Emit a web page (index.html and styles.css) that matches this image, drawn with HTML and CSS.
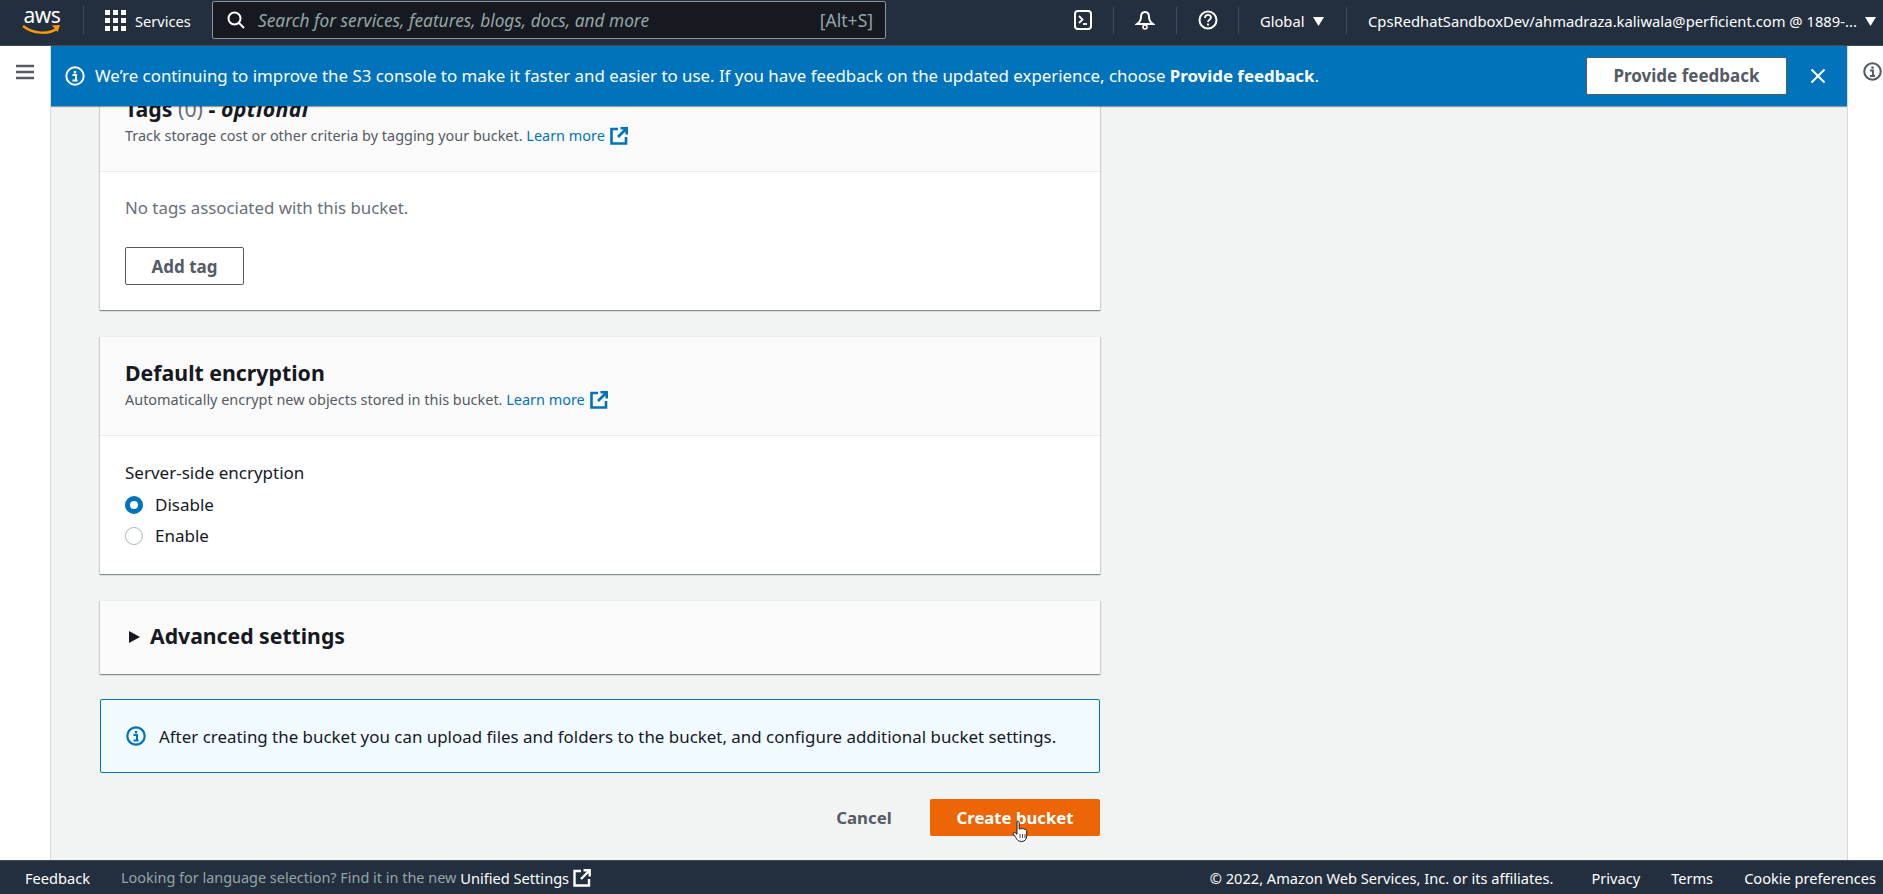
FILE: index.html
```html
<!DOCTYPE html>
<html lang="en">
<head>
<meta charset="utf-8">
<title>Create bucket - S3</title>
<link rel="stylesheet" href="styles.css">
</head>
<body>
<header class="topbar">
  <div class="logo"><span class="logo-text">aws</span>
    <svg class="logo-smile" viewBox="0 0 40 12" width="40" height="12"><path d="M1 2c10 8 26 9 35 2" fill="none" stroke="#f90" stroke-width="2.4"/><path d="M30 1.500l8-.5-2.500 7z" fill="#f90"/></svg>
  </div>
  <span class="sep sep-logo"></span>
  <svg class="grid-icon" viewBox="0 0 21 21" width="21" height="21"><g fill="#fff"><rect width="5" height="5"/><rect x="8" width="5" height="5"/><rect x="16" width="5" height="5"/><rect y="8" width="5" height="5"/><rect x="8" y="8" width="5" height="5"/><rect x="16" y="8" width="5" height="5"/><rect y="16" width="5" height="5"/><rect x="8" y="16" width="5" height="5"/><rect x="16" y="16" width="5" height="5"/></g></svg>
  <span class="services">Services</span>
  <div class="search">
    <svg viewBox="0 0 18 18" width="18" height="18" class="search-icon"><circle cx="7.500" cy="7.500" r="6" fill="none" stroke="#fff" stroke-width="2"/><path d="M12 12l5 5" stroke="#fff" stroke-width="2"/></svg>
    <span class="search-text">Search for services, features, blogs, docs, and more</span>
    <span class="search-key">[Alt+S]</span>
  </div>
  <div class="top-right">
    <div class="tool tool-first"><svg viewBox="0 0 20 20" width="20" height="20"><rect x="2" y="1" width="16" height="18" rx="3" fill="none" stroke="#fff" stroke-width="2"/><path d="M6 6l3.500 3.500L6 13" fill="none" stroke="#fff" stroke-width="1.800"/><path d="M10 14h4" stroke="#fff" stroke-width="1.800"/></svg></div>
    <span class="sep"></span>
    <div class="tool"><svg viewBox="0 0 20 20" width="20" height="20"><path d="M10 2c-3 0-4 2.500-4 5 0 3-1 5-4 7h16c-3-2-4-4-4-7 0-2.500-1-5-4-5z" fill="none" stroke="#fff" stroke-width="2"/><circle cx="10" cy="17" r="2" fill="none" stroke="#fff" stroke-width="1.600"/></svg></div>
    <span class="sep"></span>
    <div class="tool tool-help"><svg viewBox="0 0 20 20" width="20" height="20"><circle cx="10" cy="10" r="8.500" fill="none" stroke="#fff" stroke-width="2"/><path d="M7 8c0-4 6-4 6-.5 0 2.200-3 2.300-3 4.500" fill="none" stroke="#fff" stroke-width="1.800"/><rect x="9" y="13.500" width="2" height="2" fill="#fff"/></svg></div>
    <span class="sep"></span>
    <span class="region">Global</span>
    <svg class="caret region-caret" viewBox="0 0 11 9" width="11" height="9"><path d="M0 0h11L5.500 9z" fill="#fff"/></svg>
    <span class="sep sep-account"></span>
    <span class="account">CpsRedhatSandboxDev/ahmadraza.kaliwala@perficient.com @ 1889-...</span>
    <svg class="caret" viewBox="0 0 11 9" width="11" height="9"><path d="M0 0h11L5.500 9z" fill="#fff"/></svg>
  </div>
</header>

<div class="middle">
  <nav class="sidenav">
    <svg viewBox="0 0 18 16" width="18" height="16"><path d="M0 2h18M0 8h18M0 14h18" stroke="#545b64" stroke-width="2.600"/></svg>
  </nav>
  <main class="main">
    <div class="flash">
      <svg class="info-icon" viewBox="0 0 20 20" width="20" height="20"><circle cx="10" cy="10" r="8.700" fill="none" stroke="#fff" stroke-width="2"/><rect x="8.800" y="5" width="2.400" height="2.400" fill="#fff"/><path d="M7.500 9h3.500v5M7.500 14.500h5" fill="none" stroke="#fff" stroke-width="2"/></svg>
      <p class="flash-text">We’re continuing to improve the S3 console to make it faster and easier to use. If you have feedback on the updated experience, choose <strong>Provide feedback</strong>.</p>
      <button class="flash-btn">Provide feedback</button>
      <svg class="close" viewBox="0 0 16 16" width="16" height="16"><path d="M1.500 1.500l13 13M14.500 1.500l-13 13" stroke="#fff" stroke-width="2"/></svg>
    </div>
    <div class="stack">
      <section class="card">
        <div class="card-head">
          <h2 class="card-title">Tags <span class="count">(0)</span> - <em>optional</em></h2>
          <p class="card-sub">Track storage cost or other criteria by tagging your bucket. <a class="link">Learn more</a><svg class="ext" viewBox="0 0 18 18" width="18" height="18"><path d="M8 2H1.500v14.500H16V10" fill="none" stroke="#0073bb" stroke-width="2.600"/><path d="M10.500 1.300H16.700V7.500M16 2l-8 8" fill="none" stroke="#0073bb" stroke-width="2.600"/></svg></p>
        </div>
        <div class="card-body tags-body">
          <p class="empty">No tags associated with this bucket.</p>
          <button class="btn-outline">Add tag</button>
        </div>
      </section>

      <section class="card">
        <div class="card-head">
          <h2 class="card-title">Default encryption</h2>
          <p class="card-sub">Automatically encrypt new objects stored in this bucket. <a class="link">Learn more</a><svg class="ext" viewBox="0 0 18 18" width="18" height="18"><path d="M8 2H1.500v14.500H16V10" fill="none" stroke="#0073bb" stroke-width="2.600"/><path d="M10.500 1.300H16.700V7.500M16 2l-8 8" fill="none" stroke="#0073bb" stroke-width="2.600"/></svg></p>
        </div>
        <div class="card-body enc-body">
          <p class="field-label">Server-side encryption</p>
          <div class="radio-row"><span class="radio radio-on"></span><span>Disable</span></div>
          <div class="radio-row"><span class="radio"></span><span>Enable</span></div>
        </div>
      </section>

      <section class="card adv">
        <span class="tri"></span>
        <h2 class="adv-title">Advanced settings</h2>
      </section>

      <div class="info">
        <svg class="info-icon" viewBox="0 0 20 20" width="20" height="20"><circle cx="10" cy="10" r="8.700" fill="none" stroke="#0073bb" stroke-width="2.200"/><rect x="8.800" y="5" width="2.400" height="2.400" fill="#0073bb"/><path d="M7.500 9h3.500v5M7.500 14.500h5" fill="none" stroke="#0073bb" stroke-width="2"/></svg>
        <p>After creating the bucket you can upload files and folders to the bucket, and configure additional bucket settings.</p>
      </div>

      <div class="actions">
        <button class="btn-cancel">Cancel</button>
        <button class="btn-primary">Create bucket</button>
      </div>
    </div>
    <svg class="cursor" viewBox="0 0 17 23" width="17" height="23"><path d="M5 1.500c1-.8 2.200-.2 2.200 1V9l1 .1c.5-.9 1.900-.9 2.300 0 .6-.7 1.900-.5 2.200.4 1-.3 2 .3 2 1.400v5c0 3-1.800 5.600-5 5.600-3.300 0-4.500-1.500-6-4L1.300 14c-.6-1 .6-2.200 1.700-1.400l2 1.700z" fill="#fff" stroke="#16191f" stroke-width="1"/><path d="M8 14v4M10.500 14v4M13 14v4" stroke="#16191f" stroke-width=".8"/></svg>
  </main>
  <aside class="rail">
    <svg viewBox="0 0 18 18" width="19" height="19"><circle cx="9" cy="9" r="7.800" fill="none" stroke="#545b64" stroke-width="2"/><rect x="7.900" y="4.200" width="2.200" height="2.200" fill="#545b64"/><path d="M6.500 8h3v5M6.500 13.300h5" fill="none" stroke="#545b64" stroke-width="1.800"/></svg>
  </aside>
</div>

<footer class="footer">
  <span class="foot-feedback">Feedback</span>
  <span class="foot-muted">Looking for language selection? Find it in the new</span>
  <span class="foot-unified">Unified Settings</span>
  <svg class="foot-ext" viewBox="0 0 18 18" width="18" height="18"><path d="M8 2H1.500v14.500H16V10" fill="none" stroke="#fff" stroke-width="2.400"/><path d="M10.500 1.300H16.700V7.500M16 2l-8 8" fill="none" stroke="#fff" stroke-width="2.400"/></svg>
  <div class="foot-right">
    <span>© 2022, Amazon Web Services, Inc. or its affiliates.</span>
    <span class="foot-privacy">Privacy</span>
    <span class="foot-terms">Terms</span>
    <span class="foot-cookie">Cookie preferences</span>
  </div>
</footer>
</body>
</html>
```

FILE: styles.css
```css
* { box-sizing: border-box; }
html, body { margin: 0; height: 100%; }
body {
  display: flex;
  flex-direction: column;
  height: 894px;
  overflow: hidden;
  font-family: "Noto Sans", "Open Sans", sans-serif;
  color: #16191f;
  background: #fff;
}
p, h2 { margin: 0; }
button { font-family: inherit; cursor: pointer; }

.topbar {
  flex: 0 0 46px;
  display: flex;
  align-items: center;
  padding-bottom: 5px;
  background: #232f3e;
  border-bottom: 1px solid #414b58;
  color: #fff;
  font-size: 14.600px;
}
.logo { position: relative; flex: none; width: 40px; height: 32px; margin-left: 22px; }
.logo-text { display: block; font-size: 21px; line-height: 22px; text-align: center; letter-spacing: -.5px; }
.logo-smile { position: absolute; left: 0; top: 20px; }
.sep { flex: none; width: 1px; height: 28px; background: #414b58; }
.sep-logo { margin-left: 21px; }
.grid-icon { flex: none; margin-left: 21px; }
.services { flex: none; margin: 2px 0 0 9px; width: 56px; white-space: nowrap; }
.search {
  flex: none;
  display: flex;
  align-items: center;
  width: 674px;
  height: 38px;
  margin-left: 21px;
  padding: 0 12px 0 14px;
  background: #16191f;
  border: 1px solid #879596;
  border-radius: 2px;
}
.search-icon { flex: none; }
.search-text { margin-left: 13px; font-size: 17.300px; font-style: italic; color: #95a5a6; white-space: nowrap; }
.search-key { margin-left: auto; font-size: 17.500px; color: #95a5a6; white-space: nowrap; }

.top-right { flex: none; display: flex; align-items: center; width: 830px; margin-left: auto; height: 100%; }
.tool { flex: none; display: flex; justify-content: center; width: 62px; }
.tool-first { width: 60px; }
.tool-help { width: 61px; }
.top-right .sep { height: 27px; }
.region { flex: none; margin: 2px 0 0 21px; width: 45px; font-size: 14.700px; white-space: nowrap; }
.caret { flex: none; margin: 2px 7px 0 8px; }
.region-caret { margin-right: 22px; }
.account { flex: none; margin: 2px 0 0 21px; width: 489px; font-size: 14.770px; white-space: nowrap; }

.middle { flex: 1; display: flex; min-height: 0; }
.sidenav { flex: 0 0 50px; padding: 17px 0 0 16px; background: #fff; }
.rail { flex: 0 0 35px; padding: 16px 0 0 15px; background: #fff; }
.rail svg { display: block; }
.main {
  position: relative;
  flex: 1;
  min-width: 0;
  overflow: hidden;
  background: #f2f3f3;
  border-left: 1px solid #d5dbdb;
  border-right: 1px solid #d5dbdb;
}

.flash {
  position: absolute;
  z-index: 2;
  top: 0;
  left: -1px;
  right: -1px;
  height: 60px;
  display: flex;
  align-items: center;
  padding: 0 22px 0 15px;
  background: #0073bb;
  color: #fff;
  box-shadow: 0 1px 1px rgba(0, 28, 36, .4);
}
.flash .info-icon { flex: none; }
.flash-text { margin-left: 10px; padding-bottom: 2px; font-size: 16.850px; white-space: nowrap; }
.flash-btn {
  width: 201px;
  height: 38px;
  margin-left: auto;
  padding-bottom: 3px;
  background: #fff;
  border: 1px solid #545b64;
  border-radius: 2px;
  color: #545b64;
  font-size: 17px;
  font-weight: 700;
}
.close { margin-left: 23px; flex: none; }

.stack { display: flex; flex-direction: column; gap: 26px; width: 1049px; padding: 26px 0 0 49px; }
.card { background: #fff; box-shadow: 0 1px 1px rgba(0, 28, 36, .3), 1px 1px 1px rgba(0, 28, 36, .12), -1px 1px 1px rgba(0, 28, 36, .12); border-top: 1px solid #eaeded; }
.card-head { height: 99px; padding: 22px 25px 0; background: #fafafa; border-bottom: 1px solid #eaeded; }
.card-title { font-size: 21.300px; line-height: 28px; font-weight: 700; color: #16191f; white-space: nowrap; }
.count { font-weight: 400; color: #687078; }
.card-title em { font-weight: 700; letter-spacing: .4px; }
.card-sub { margin-top: 3px; font-size: 14.450px; line-height: 20px; color: #545b64; white-space: nowrap; }
.link { color: #0073bb; }
.ext { margin-left: 5px; vertical-align: -4px; }
.card-body { padding: 0 25px; }
.tags-body { height: 138px; padding-top: 24px; }
.empty { font-size: 16.850px; line-height: 24px; color: #687078; }
.btn-outline {
  display: block;
  width: 119px;
  height: 38px;
  margin-top: 27px;
  background: #fff;
  border: 1px solid #545b64;
  border-radius: 2px;
  color: #545b64;
  font-size: 17px;
  font-weight: 700;
}
.enc-body { height: 138px; padding-top: 27px; font-size: 17px; }
.field-label { line-height: 20px; }
.radio-row { display: flex; align-items: center; gap: 12px; height: 31px; }
.field-label + .radio-row { margin-top: 6px; }
.radio { flex: none; width: 18px; height: 18px; border: 1.500px solid #aab7b8; border-radius: 50%; background: #fff; }
.radio-on { border: 5px solid #0073bb; }
.adv { display: flex; align-items: center; height: 74px; margin-bottom: -1px; padding: 0 0 4px 29px; background: #fafafa; }
.tri { width: 11px; height: 12px; margin-top: 2px; border-left: 11px solid #16191f; border-top: 6px solid transparent; border-bottom: 6px solid transparent; }
.adv-title { margin-left: 10px; font-size: 21.200px; font-weight: 700; white-space: nowrap; }
.info {
  display: flex;
  align-items: center;
  gap: 13px;
  height: 74px;
  padding-left: 25px;
  background: #f1faff;
  border: 1px solid #0073bb;
  border-radius: 2px;
  font-size: 16.920px;
  white-space: nowrap;
}
.actions { display: flex; align-items: center; justify-content: flex-end; }
.btn-cancel { border: 0; background: none; width: 132px; padding: 0; color: #545b64; font-size: 16.800px; font-weight: 700; height: 37px; }
.btn-primary { width: 170px; height: 37px; border: 0; border-radius: 2px; background: #ec6608; color: #fff; font-size: 16.700px; font-weight: 700; white-space: nowrap; }
.cursor { position: absolute; left: 961px; top: 774px; z-index: 3; }

.footer {
  flex: 0 0 34px;
  display: flex;
  align-items: center;
  padding-left: 25px;
  background: #232f3e;
  border-top: 1px solid #414b58;
  color: #fff;
  font-size: 14.600px;
  white-space: nowrap;
}
.foot-muted { margin-left: 31px; font-size: 14.450px; color: #95a5a6; }
.foot-unified { margin-left: 4px; }
.foot-ext { margin-left: 4px; flex: none; }
.foot-right { display: flex; margin-left: auto; padding-right: 7px; }
.foot-privacy { margin-left: 38px; }
.foot-terms { margin-left: 31px; }
.foot-cookie { margin-left: 31px; }
```
